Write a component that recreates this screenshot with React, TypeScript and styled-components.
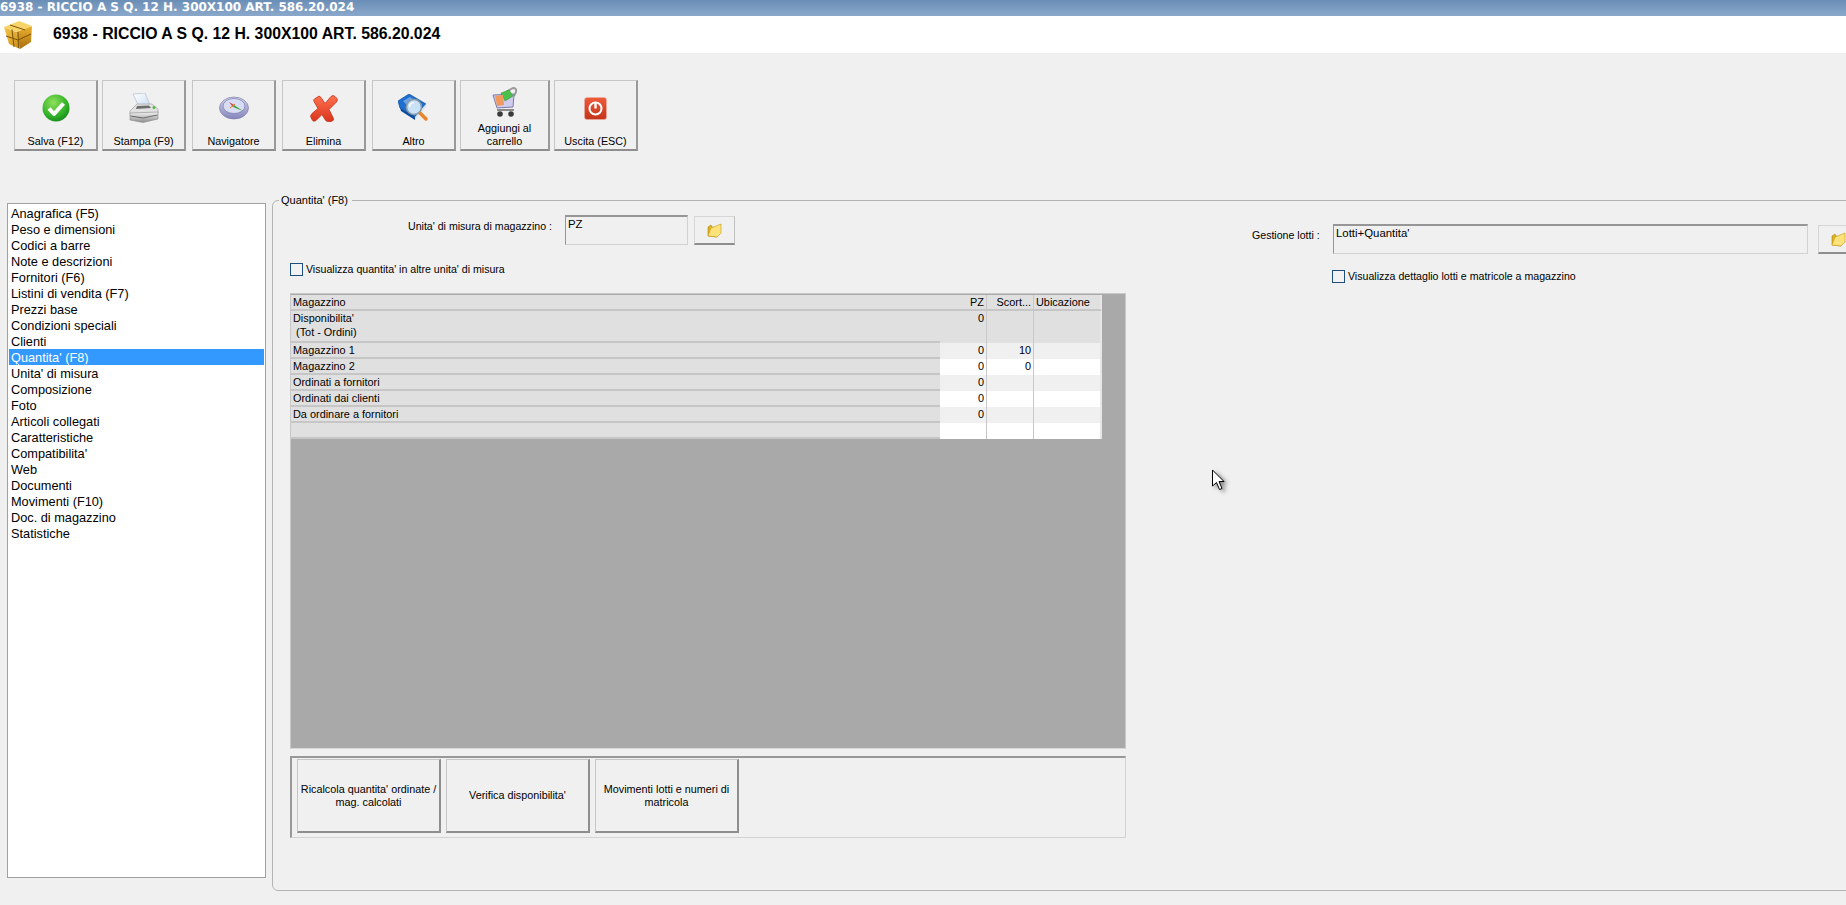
import React from 'react';
import styled, { createGlobalStyle } from 'styled-components';

const GlobalStyle = createGlobalStyle`
    html, body {
        margin: 0;
        padding: 0;
        background: #f0f0f0;
    }
    body {
        font-family: "Liberation Sans", Arial, sans-serif;
        color: #000;
    }
`;

const Page = styled.div`
    position: relative;
    width: 1846px;
    height: 905px;
    overflow: hidden;
    background: #f0f0f0;
`;

const TitleBar = styled.div`
    height: 16px;
    line-height: 15px;
    font-family: "DejaVu Sans", sans-serif;
    font-size: 12px;
    font-weight: 700;
    text-rendering: geometricPrecision;
    color: #fff;
    white-space: nowrap;
    background: linear-gradient(#6a8eb6, #8aa8cb);
`;

const Header = styled.div`
    display: flex;
    align-items: center;
    height: 37px;
    padding-left: 3px;
    background: #fff;
`;

const HeaderTitle = styled.div`
    margin: -2px 0 0 20px;
    font-size: 15.8px;
    font-weight: 700;
    white-space: nowrap;
`;

const Toolbar = styled.div`
    display: flex;
    height: 112px;
    padding: 27px 0 0 14px;
`;

const ToolButton = styled.button<{ $width?: number; $gap?: number }>`
    display: flex;
    flex-direction: column;
    align-items: center;
    box-sizing: border-box;
    width: ${({ $width }) => $width ?? 84}px;
    height: 71px;
    margin: 0 ${({ $gap }) => $gap ?? 6}px 0 0;
    padding: 0 2px 1px;
    background: #f0f0f0;
    border-style: solid;
    border-width: 1px 2px 2px 1px;
    border-color: #c6c6c6 #9a9a9a #8e8e8e #c6c6c6;
    font-family: inherit;
`;

const ToolIcon = styled.span`
    flex: 1;
    display: flex;
    align-items: center;
    justify-content: center;
`;

const ToolLabel = styled.span`
    font-size: 10.8px;
    line-height: 13px;
    text-align: center;
    color: #000;
`;

const Main = styled.div`
    display: flex;
    gap: 6px;
    padding-left: 7px;
`;

const Menu = styled.ul`
    box-sizing: border-box;
    flex: none;
    width: 259px;
    height: 675px;
    margin: 11px 0 0;
    padding: 1px;
    list-style: none;
    background: #fff;
    border: 1px solid #a0a0a0;
`;

const MenuItem = styled.li<{ $active?: boolean }>`
    box-sizing: border-box;
    height: 16px;
    padding-left: 2px;
    font-size: 12.75px;
    line-height: 17px;
    white-space: nowrap;
    color: ${({ $active }) => ($active ? '#fff' : '#000')};
    background: ${({ $active }) => ($active ? '#3399ff' : 'transparent')};
    outline: ${({ $active }) => ($active ? '1px dotted #c07a30' : 'none')};
    outline-offset: -1px;
`;

const Group = styled.fieldset`
    box-sizing: border-box;
    flex: none;
    display: flex;
    width: 1620px;
    height: 699px;
    margin: 0;
    padding: 7px 0 0 17px;
    border: 1px solid #b4b4b4;
    border-radius: 6px;
`;

const GroupTitle = styled.legend`
    margin-left: -11px;
    padding: 0 4px 0 2px;
    height: 16px;
    font-size: 11px;
    line-height: 16px;
`;

const LeftColumn = styled.div`
    flex: none;
    width: 836px;
`;

const RightColumn = styled.div`
    flex: none;
    width: 640px;
    margin-left: 126px;
    padding-top: 9px;
`;

const FieldRow = styled.div<{ $indent?: number }>`
    display: flex;
    align-items: flex-start;
    padding-left: ${({ $indent }) => $indent ?? 0}px;
`;

const FieldLabel = styled.label<{ $width: number }>`
    width: ${({ $width }) => $width}px;
    flex: none;
    font-size: 10.6px;
    line-height: 22px;
    white-space: nowrap;
`;

const ReadOnly = styled.div<{ $width: number }>`
    box-sizing: border-box;
    flex: none;
    width: ${({ $width }) => $width}px;
    height: 30px;
    padding: 1px 0 0 2px;
    font-size: 11.4px;
    line-height: 13px;
    background: #f0f0f0;
    border-style: solid;
    border-width: 2px 1px 1px 1px;
    border-color: #969696 #d2d2d2 #d2d2d2 #969696;
`;

const FolderButton = styled.button<{ $gap: number }>`
    display: flex;
    align-items: center;
    justify-content: center;
    box-sizing: border-box;
    flex: none;
    width: 41px;
    height: 29px;
    margin: 1px 0 0 ${({ $gap }) => $gap}px;
    padding: 0;
    background: #f0f0f0;
    border-style: solid;
    border-width: 1px 1px 2px 1px;
    border-color: #d6d6d6 #c0c0c0 #8e8e8e #d6d6d6;
`;

const CheckRow = styled.label<{ $top: number; $indent?: number }>`
    display: flex;
    align-items: center;
    gap: 3px;
    height: 14px;
    margin: ${({ $top }) => $top}px 0 0 ${({ $indent }) => $indent ?? 0}px;
    font-size: 10.6px;
    white-space: nowrap;
`;

const CheckBox = styled.input.attrs({ type: 'checkbox' })`
    appearance: none;
    box-sizing: border-box;
    width: 13px;
    height: 13px;
    margin: 0;
    background: #f2f2f2;
    border: 1px solid #1c4f7c;
`;

const GridArea = styled.div`
    box-sizing: border-box;
    height: 456px;
    margin-top: 17px;
    padding-top: 1px;
    background: #a9a9a9;
    border: 1px solid #c8c8c8;
    border-bottom-color: #d8d8d8;
`;

const StockTable = styled.table`
    width: 811px;
    table-layout: fixed;
    border-collapse: separate;
    border-spacing: 0;
    font-size: 10.9px;
    col:nth-child(1) { width: 649px; }
    col:nth-child(2) { width: 47px; }
    col:nth-child(3) { width: 47px; }
    col:nth-child(4) { width: 68px; }
`;

const TableRow = styled.tr<{ $tall?: boolean }>`
    height: ${({ $tall }) => ($tall ? 32 : 16)}px;
`;

const RowHead = styled.td`
    box-sizing: border-box;
    padding: 0 0 0 2px;
    line-height: 14px;
    vertical-align: top;
    white-space: pre;
    background: #e0e0e0;
    border-bottom: 2px solid #c6c6c6;
`;

const Cell = styled.td<{ $bg: string; $align?: string; $lined?: boolean }>`
    box-sizing: border-box;
    padding: 0 2px;
    line-height: 14px;
    vertical-align: top;
    overflow: hidden;
    white-space: nowrap;
    text-align: ${({ $align }) => $align ?? 'right'};
    background: ${({ $bg }) => $bg};
    border-right: 1px solid #c8c8c8;
    border-bottom: ${({ $lined }) => ($lined ? '2px solid #c6c6c6' : 'none')};
    &:last-child {
        border-right: 2px solid #e6e6e6;
    }
`;

const ActionPanel = styled.div`
    display: flex;
    gap: 5px;
    box-sizing: border-box;
    height: 82px;
    margin-top: 7px;
    padding: 1px 0 0 5px;
    border-style: solid;
    border-width: 2px 1px 1px 2px;
    border-color: #989898 #d2d2d2 #d2d2d2 #989898;
`;

const ActionButton = styled.button`
    box-sizing: border-box;
    flex: none;
    width: 144px;
    height: 74px;
    padding: 0 2px;
    font-family: inherit;
    font-size: 10.8px;
    line-height: 13px;
    color: #000;
    background: #f0f0f0;
    border-style: solid;
    border-width: 1px 2px 2px 1px;
    border-color: #c6c6c6 #8e8e8e #8e8e8e #c6c6c6;
`;

const Cursor = styled.svg`
    position: absolute;
    left: 1211px;
    top: 469px;
    filter: drop-shadow(3px 2px 2px rgba(0, 0, 0, 0.45));
`;

const BoxIcon = () => (
    <svg width="30" height="30" viewBox="0 0 30 30">
        <defs>
            <linearGradient id="boxLeft" x1="0" y1="0" x2="1" y2="1">
                <stop offset="0" stopColor="#f6c94a" />
                <stop offset="1" stopColor="#c98a14" />
            </linearGradient>
            <linearGradient id="boxRight" x1="0" y1="0" x2="0" y2="1">
                <stop offset="0" stopColor="#eeb22e" />
                <stop offset="1" stopColor="#a96f0e" />
            </linearGradient>
        </defs>
        <path d="M1 7 L13 12 L17 29 L6 24 Z" fill="url(#boxLeft)" />
        <path d="M13 12 L29 6 L28 22 L17 29 Z" fill="url(#boxRight)" />
        <path d="M1 7 L16 1 L29 6 L13 12 Z" fill="#f8d468" />
        <path d="M7 5 L22 10 M3 16 L15 20 L28 14 M15 12 L15.5 28 M9 9.5 L11 27" stroke="#7a5208" strokeWidth="1" fill="none" />
    </svg>
);

const CheckIcon = () => (
    <svg width="28" height="28" viewBox="0 0 28 28">
        <defs>
            <radialGradient id="okGreen" cx="0.4" cy="0.3" r="0.8">
                <stop offset="0" stopColor="#8fe05a" />
                <stop offset="0.6" stopColor="#34b52a" />
                <stop offset="1" stopColor="#0f7f1c" />
            </radialGradient>
        </defs>
        <circle cx="14" cy="14" r="13.5" fill="url(#okGreen)" />
        <path d="M7 14.5 L12 20 L21.5 9.5" fill="none" stroke="#fff" strokeWidth="4" strokeLinejoin="round" />
    </svg>
);

const PrinterIcon = () => (
    <svg width="30" height="30" viewBox="0 0 30 30">
        <defs>
            <linearGradient id="printerFront" x1="0" y1="0" x2="0" y2="1">
                <stop offset="0" stopColor="#f4f4f4" />
                <stop offset="1" stopColor="#8e8e8e" />
            </linearGradient>
            <linearGradient id="printerPaper" x1="0" y1="0" x2="1" y2="1">
                <stop offset="0" stopColor="#ffffff" />
                <stop offset="1" stopColor="#c8dcf2" />
            </linearGradient>
        </defs>
        <path d="M4 1 L16 0 L21 12 L10 14 Z" fill="url(#printerPaper)" stroke="#aab6c4" strokeWidth="0.6" />
        <path d="M1 18 L8 11 L23 11 L29 16 L29 20 L1 21 Z" fill="#e2e2e2" stroke="#9a9a9a" strokeWidth="0.6" />
        <path d="M8 13 L20 12.5 L22 15 L7 16 Z" fill="#6e6e6e" />
        <path d="M1 20 L29 19 L29 26 L14 29.5 L1 27 Z" fill="url(#printerFront)" stroke="#8a8a8a" strokeWidth="0.6" />
        <path d="M1.5 23 L14 25 L28.5 22" stroke="#6a6a6a" strokeWidth="1" fill="none" />
        <circle cx="25" cy="14.5" r="1.5" fill="#4dbb3c" />
    </svg>
);

const CompassIcon = () => (
    <svg width="30" height="24" viewBox="0 0 30 24">
        <defs>
            <linearGradient id="compassRim" x1="0" y1="0" x2="0" y2="1">
                <stop offset="0" stopColor="#d4d4f0" />
                <stop offset="1" stopColor="#8484bc" />
            </linearGradient>
        </defs>
        <ellipse cx="15" cy="12" rx="14.5" ry="11" fill="url(#compassRim)" stroke="#74749c" strokeWidth="0.6" />
        <ellipse cx="15" cy="10" rx="11" ry="7.5" fill="#d8dcf4" stroke="#7a7aa8" strokeWidth="0.7" />
        <path d="M10 6 L15 9 L14 11 Z" fill="#d83a22" />
        <path d="M15 9 L24 15 L14 11 Z" fill="#3aa83a" />
        <path d="M11 12 L16 8" stroke="#e07a30" strokeWidth="1" />
    </svg>
);

const DeleteIcon = () => (
    <svg width="28" height="29" viewBox="0 0 28 28">
        <defs>
            <linearGradient id="delRed" x1="0" y1="0" x2="0" y2="1">
                <stop offset="0" stopColor="#ff7350" />
                <stop offset="1" stopColor="#d9341c" />
            </linearGradient>
        </defs>
        <path
            d="M7 3 Q9 0 11 3 L15 9 L21 2 Q23 0 25 2 L27 4 Q28 6 26 8 L19 15 L23 23 Q25 26 21 27 L18 27 Q16 27 15 25 L12 20 L6 26 Q3 28 2 25 L1 23 Q0 21 2 19 L8 14 L4 7 Q3 5 5 4 Z"
            fill="url(#delRed)"
            stroke="#c03018"
            strokeWidth="0.8"
        />
    </svg>
);

const BookIcon = () => (
    <svg width="31" height="28" viewBox="0 0 31 28">
        <path d="M0 7 L11 0 L28 10 L17 23 L2 14 Z" fill="#1f6fd0" stroke="#0d4a9c" strokeWidth="0.7" />
        <path d="M2 14 L3 17 L17 26 L17 23 Z" fill="#0d4a9c" />
        <path d="M17 23 L28 10 L28 13 L17 26 Z" fill="#d8e4f0" />
        <path d="M5 7 L12 3 L23 10 L15 18 Z" fill="#6aa2e4" />
        <path d="M21 18 L28 25" stroke="#e8862c" strokeWidth="3.5" strokeLinecap="round" />
        <circle cx="16" cy="13" r="7.5" fill="#c8e2f8" stroke="#8a9aa8" strokeWidth="1.6" />
        <path d="M11.5 13 A5 5 0 0 1 16 8.5" stroke="#fff" strokeWidth="1.5" fill="none" />
    </svg>
);

const CartIcon = () => (
    <svg width="25" height="30" viewBox="0 0 25 30">
        <path d="M14 5 L21 1 Q25 1 24 5 L22 9" fill="none" stroke="#9a9a9a" strokeWidth="2" />
        <path d="M1 8 L22 7 L21 20 L5 21 Z" fill="#cfccf0" stroke="#7a7aa8" strokeWidth="1" />
        <path d="M9 6 L17 3 L21 9 L13 14 Z" fill="#4cc04c" stroke="#2a8a2a" strokeWidth="0.5" />
        <path d="M3 9 L11 8 L12 18 L5 19 Z" fill="#f09a60" />
        <path d="M5 22 L22 22 L22 24 L5 24 Z" fill="#8a8a8a" />
        <circle cx="8" cy="27" r="2.8" fill="#3a3a3a" />
        <circle cx="19" cy="27" r="2.8" fill="#3a3a3a" />
    </svg>
);

const PowerIcon = () => (
    <svg width="23" height="23" viewBox="0 0 23 23">
        <defs>
            <linearGradient id="powerRed" x1="0" y1="0" x2="0" y2="1">
                <stop offset="0" stopColor="#ee5a3a" />
                <stop offset="1" stopColor="#c4341a" />
            </linearGradient>
        </defs>
        <rect x="0.5" y="0.5" width="22" height="22" rx="2.5" fill="url(#powerRed)" stroke="#e8b0a0" strokeWidth="0.6" />
        <circle cx="11.5" cy="11.5" r="6" fill="none" stroke="#fff" strokeWidth="2" />
        <path d="M11.5 5.5 V11.5" stroke="#fff" strokeWidth="2.4" />
    </svg>
);

const FolderIcon = () => (
    <svg width="15" height="15" viewBox="0 0 15 15">
        <path d="M1 4 L1 13 L10 14 L10 5 L5 4 L4 2 Z" fill="#e0b020" stroke="#b08810" strokeWidth="0.6" />
        <path d="M4 5 L14 1 L14 10 L10 14 L1 13 Z" fill="#fce27a" stroke="#c49a18" strokeWidth="0.6" />
    </svg>
);

const menuItems = [
    'Anagrafica (F5)',
    'Peso e dimensioni',
    'Codici a barre',
    'Note e descrizioni',
    'Fornitori (F6)',
    'Listini di vendita (F7)',
    'Prezzi base',
    'Condizioni speciali',
    'Clienti',
    "Quantita' (F8)",
    "Unita' di misura",
    'Composizione',
    'Foto',
    'Articoli collegati',
    'Caratteristiche',
    "Compatibilita'",
    'Web',
    'Documenti',
    'Movimenti (F10)',
    'Doc. di magazzino',
    'Statistiche',
];

const tools = [
    { label: 'Salva (F12)', icon: <CheckIcon />, gap: 4 },
    { label: 'Stampa (F9)', icon: <PrinterIcon /> },
    { label: 'Navigatore', icon: <CompassIcon /> },
    { label: 'Elimina', icon: <DeleteIcon /> },
    { label: 'Altro', icon: <BookIcon />, gap: 4 },
    { label: 'Aggiungi al carrello', icon: <CartIcon />, width: 90, gap: 4 },
    { label: 'Uscita (ESC)', icon: <PowerIcon /> },
];

const stockRows = [
    { name: 'Magazzino 1', pz: '0', scorta: '10', bg: '#f0f0f0' },
    { name: 'Magazzino 2', pz: '0', scorta: '0', bg: '#fff' },
    { name: 'Ordinati a fornitori', pz: '0', scorta: '', bg: '#f0f0f0' },
    { name: 'Ordinati dai clienti', pz: '0', scorta: '', bg: '#fff' },
    { name: 'Da ordinare a fornitori', pz: '0', scorta: '', bg: '#f0f0f0' },
    { name: '', pz: '', scorta: '', bg: '#fff' },
];

const App: React.FC = () => {
    const title = '6938 - RICCIO A S Q. 12 H. 300X100 ART. 586.20.024';

    return (
        <Page>
            <GlobalStyle />
            <TitleBar>{title}</TitleBar>
            <Header>
                <BoxIcon />
                <HeaderTitle>{title}</HeaderTitle>
            </Header>
            <Toolbar>
                {tools.map((tool) => (
                    <ToolButton key={tool.label} $width={tool.width} $gap={tool.gap}>
                        <ToolIcon>{tool.icon}</ToolIcon>
                        <ToolLabel>{tool.label}</ToolLabel>
                    </ToolButton>
                ))}
            </Toolbar>
            <Main>
                <Menu>
                    {menuItems.map((item) => (
                        <MenuItem key={item} $active={item === "Quantita' (F8)"}>
                            {item}
                        </MenuItem>
                    ))}
                </Menu>
                <Group>
                    <GroupTitle>Quantita' (F8)</GroupTitle>
                    <LeftColumn>
                        <FieldRow $indent={118}>
                            <FieldLabel $width={157}>Unita' di misura di magazzino :</FieldLabel>
                            <ReadOnly $width={123}>PZ</ReadOnly>
                            <FolderButton $gap={6}>
                                <FolderIcon />
                            </FolderButton>
                        </FieldRow>
                        <CheckRow $top={17}>
                            <CheckBox />
                            Visualizza quantita' in altre unita' di misura
                        </CheckRow>
                        <GridArea>
                            <StockTable>
                                <colgroup>
                                    <col />
                                    <col />
                                    <col />
                                    <col />
                                </colgroup>
                                <tbody>
                                    <TableRow>
                                        <RowHead>Magazzino</RowHead>
                                        <Cell $bg="#e0e0e0" $lined>PZ</Cell>
                                        <Cell $bg="#e0e0e0" $lined>Scort...</Cell>
                                        <Cell $bg="#e0e0e0" $lined $align="left">Ubicazione</Cell>
                                    </TableRow>
                                    <TableRow $tall>
                                        <RowHead>{"Disponibilita'\n (Tot - Ordini)"}</RowHead>
                                        <Cell $bg="#e0e0e0">0</Cell>
                                        <Cell $bg="#e0e0e0" />
                                        <Cell $bg="#e0e0e0" />
                                    </TableRow>
                                    {stockRows.map((row, index) => (
                                        <TableRow key={index}>
                                            <RowHead>{row.name}</RowHead>
                                            <Cell $bg={row.bg}>{row.pz}</Cell>
                                            <Cell $bg={row.bg}>{row.scorta}</Cell>
                                            <Cell $bg={row.bg} />
                                        </TableRow>
                                    ))}
                                </tbody>
                            </StockTable>
                        </GridArea>
                        <ActionPanel>
                            <ActionButton>Ricalcola quantita' ordinate / mag. calcolati</ActionButton>
                            <ActionButton>Verifica disponibilita'</ActionButton>
                            <ActionButton>Movimenti lotti e numeri di matricola</ActionButton>
                        </ActionPanel>
                    </LeftColumn>
                    <RightColumn>
                        <FieldRow>
                            <FieldLabel $width={81}>Gestione lotti :</FieldLabel>
                            <ReadOnly $width={475}>Lotti+Quantita'</ReadOnly>
                            <FolderButton $gap={10}>
                                <FolderIcon />
                            </FolderButton>
                        </FieldRow>
                        <CheckRow $top={15} $indent={80}>
                            <CheckBox />
                            Visualizza dettaglio lotti e matricole a magazzino
                        </CheckRow>
                    </RightColumn>
                </Group>
            </Main>
            <Cursor width="16" height="24" viewBox="0 0 16 24">
                <path d="M1.5 1 L1.5 17 L5.5 13.5 L8.5 20.5 L11 19.5 L8 12.5 L13 12.5 Z" fill="#fff" stroke="#000" strokeWidth="1" />
            </Cursor>
        </Page>
    );
};

export default App;
